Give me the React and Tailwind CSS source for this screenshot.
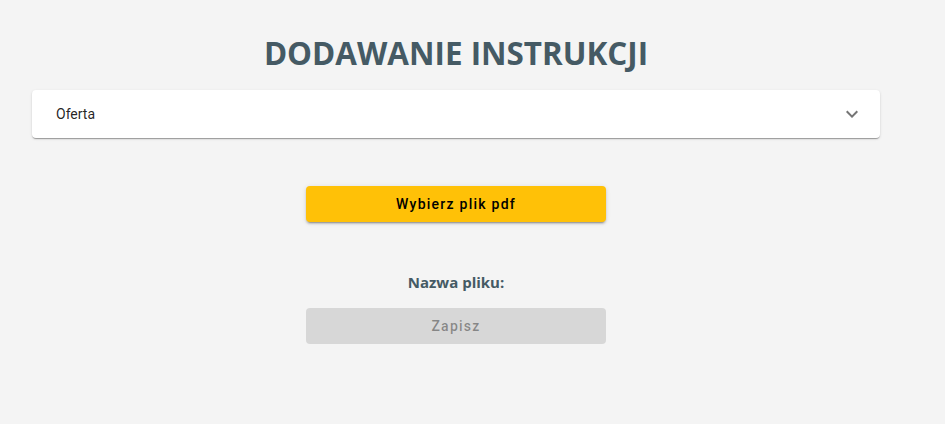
import React from "react";

const ChevronDown = () => (
  <svg width="24" height="24" viewBox="0 0 24 24" fill="#757575">
    <path d="M16.59 8.59 12 13.17 7.41 8.59 6 10l6 6 6-6z" />
  </svg>
);

export default function App() {
  return (
    <div className="min-h-[424px] w-full bg-[#f4f4f4]">
      <div className="ml-[32px] w-[848px] flex flex-col items-center pt-[30px]">
        <h1 className="font-['Open_Sans',sans-serif] text-[31.4px] leading-[46px] font-bold text-[#455a64]">
          DODAWANIE INSTRUKCJI
        </h1>

        <div className="mt-[14px] w-full h-[48px] bg-white rounded-[4px] shadow-[0_2px_1px_-1px_rgba(0,0,0,0.2),0_1px_1px_0_rgba(0,0,0,0.14),0_1px_3px_0_rgba(0,0,0,0.12)] flex items-center justify-between pl-[24px] pr-[16px]">
          <span className="font-['Roboto',sans-serif] text-[14px] font-normal text-[rgba(0,0,0,0.87)]">
            Oferta
          </span>
          <ChevronDown />
        </div>

        <button className="mt-[48px] w-[300px] h-[36px] bg-[#ffc107] rounded-[4px] font-['Roboto',sans-serif] text-[14px] font-medium tracking-[1.25px] text-black shadow-[0_3px_1px_-2px_rgba(0,0,0,0.2),0_2px_2px_0_rgba(0,0,0,0.14),0_1px_5px_0_rgba(0,0,0,0.12)]">
          Wybierz plik pdf
        </button>

        <p className="mt-[48px] font-['Open_Sans',sans-serif] text-[15px] leading-[24px] font-bold text-[#455a64]">
          Nazwa pliku:
        </p>

        <button
          disabled
          className="mt-[14px] w-[300px] h-[36px] bg-[#d7d7d7] rounded-[4px] font-['Roboto',sans-serif] text-[14px] font-medium tracking-[1.25px] text-[rgba(0,0,0,0.38)]"
        >
          Zapisz
        </button>
      </div>
    </div>
  );
}
